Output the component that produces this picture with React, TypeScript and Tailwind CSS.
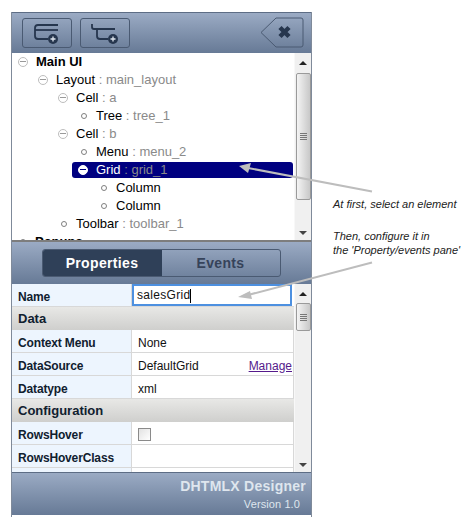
import type { ReactNode } from 'react';

const treeRows = [
    { indent: 6, kind: 'minus', name: 'Main UI', id: '', bold: true },
    { indent: 26, kind: 'minus', name: 'Layout', id: 'main_layout' },
    { indent: 46, kind: 'minus', name: 'Cell', id: 'a' },
    { indent: 67, kind: 'dot', name: 'Tree', id: 'tree_1' },
    { indent: 46, kind: 'minus', name: 'Cell', id: 'b' },
    { indent: 67, kind: 'dot', name: 'Menu', id: 'menu_2' },
    { indent: 66, kind: 'minus', name: 'Grid', id: 'grid_1', selected: true },
    { indent: 87, kind: 'dot', name: 'Column', id: '' },
    { indent: 87, kind: 'dot', name: 'Column', id: '' },
    { indent: 47, kind: 'dot', name: 'Toolbar', id: 'toolbar_1' },
    { indent: 6, kind: 'dot', name: 'Popups', id: '', bold: true },
];

function TreeIcon({ kind, selected }: { kind: string; selected?: boolean }) {
    if (kind === 'dot') {
        return <span className="w-[6px] h-[6px] mx-[2px] rounded-full border border-[#808080] bg-white shrink-0" />;
    }
    return (
        <span className={`relative w-[10px] h-[10px] rounded-full border shrink-0 ${selected ? 'bg-white border-white' : 'bg-white border-[#bdbdbd]'}`}>
            <span className={`absolute left-[1px] top-[3px] w-[6px] h-px ${selected ? 'bg-[#000080]' : 'bg-[#9a9a9a]'}`} />
        </span>
    );
}

function ToolButton({ children }: { children: ReactNode }) {
    return (
        <div className="w-[50px] h-[30px] rounded-[3px] border border-[#4a5a72] flex items-center justify-center">
            {children}
        </div>
    );
}

function ScrollBar({ topClass, thumbClass }: { topClass: string; thumbClass: string }) {
    return (
        <div className="w-[17px] shrink-0 bg-[#f0f0f0] flex flex-col items-center border-l border-[#f8f8f8]">
            <div className={`flex items-center justify-center shrink-0 ${topClass}`}>
                <div className="w-0 h-0 border-x-[4px] border-x-transparent border-b-[4px] border-b-[#222]" />
            </div>
            <div className={`w-[15px] rounded-[2px] border border-[#9a9a9a] bg-gradient-to-r from-[#f4f4f4] to-[#c8c8c8] flex flex-col items-center gap-px shrink-0 ${thumbClass}`}>
                <div className="w-[7px] h-px bg-[#777]" />
                <div className="w-[7px] h-px bg-[#777]" />
                <div className="w-[7px] h-px bg-[#777]" />
                <div className="w-[7px] h-px bg-[#777]" />
            </div>
            <div className="flex-1" />
            <div className="h-[14px] flex items-center justify-center shrink-0">
                <div className="w-0 h-0 border-x-[4px] border-x-transparent border-t-[4px] border-t-[#444]" />
            </div>
        </div>
    );
}

function PropRow({ label, children }: { label: string; children?: ReactNode }) {
    return (
        <div className="flex h-[23px] shrink-0 border-b border-[#d8d8d8]">
            <div className="w-[120px] shrink-0 bg-[#edf5fe] border-r border-[#d8d8d8] pl-[6px] pt-[2px] font-bold text-[12px] tracking-[-0.15px] leading-[22px] text-[#10202f]">
                {label}
            </div>
            <div className="flex-1 flex items-center justify-between pl-[6px] pt-[3px] text-[12px] text-[#111] border-r border-[#d8d8d8]">
                {children}
            </div>
        </div>
    );
}

function GroupRow({ label }: { label: string }) {
    return (
        <div className="h-[23px] shrink-0 bg-gradient-to-b from-[#e8e8e6] to-[#cfcfcd] pl-[6px] font-bold text-[13px] leading-[24px] text-[#10202f]">
            {label}
        </div>
    );
}

export default function App() {
    return (
        <div className="relative w-[464px] h-[529px] bg-white overflow-hidden font-['Liberation_Sans',Arial,sans-serif]">
            <div className="pl-[11px] pt-[12px]">
                <div className="w-[301px] h-[505px] border-x border-[#7f8a9a] flex flex-col">
                    {/* Toolbar */}
                    <div className="h-[41px] shrink-0 border-t border-[#5d6d85] bg-gradient-to-b from-[#9babc4] to-[#677a96] flex items-center pl-[10px] pr-[7px] gap-[8px]">
                        <ToolButton>
                            <svg width="48" height="28" viewBox="0 0 48 28" fill="none" stroke="#26364e" strokeWidth="1.800">
                                <path d="M35 6H15a3 3 0 0 0-3 3v8a3 3 0 0 0 3 3h10" />
                                <path d="M12 11h23" />
                                <circle cx="30" cy="20" r="5" fill="#26364e" stroke="none" />
                                <path d="M27.500 20h5M30 17.500v5" stroke="#dfe6ee" strokeWidth="1.300" />
                            </svg>
                        </ToolButton>
                        <ToolButton>
                            <svg width="48" height="28" viewBox="0 0 48 28" fill="none" stroke="#26364e" strokeWidth="1.800">
                                <path d="M11 5v3a2 2 0 0 0 2 2h21" />
                                <path d="M16 10v7a3 3 0 0 0 3 3h8" />
                                <circle cx="32" cy="20" r="5" fill="#26364e" stroke="none" />
                                <path d="M29.500 20h5M32 17.500v5" stroke="#dfe6ee" strokeWidth="1.300" />
                            </svg>
                        </ToolButton>
                        <svg className="ml-auto" width="44" height="32" viewBox="0 0 44 32" fill="none">
                            <path d="M1 15.500 16 1h25a2 2 0 0 1 2 2v25a2 2 0 0 1-2 2H16z" stroke="#4a5a72" />
                            <path d="M20 10.500l9 9M29 10.500l-9 9" stroke="#26364e" strokeWidth="4.500" />
                        </svg>
                    </div>

                    {/* Tree */}
                    <div className="h-[187px] shrink-0 bg-white flex overflow-hidden">
                        <div className="flex-1 min-w-0 overflow-hidden pr-px">
                            {treeRows.map((row, i) => (
                                <div key={i} className="h-[18px] flex items-center" style={{ paddingLeft: row.indent }}>
                                    <TreeIcon kind={row.kind} selected={row.selected} />
                                    <div className={`h-[16px] flex-1 flex items-center text-[13px] whitespace-nowrap ${row.selected ? 'bg-[#000080] rounded-[3px] text-white ml-[-16px] pl-[24px]' : row.kind === 'dot' ? 'text-black ml-[-1px] pl-[8px]' : 'text-black ml-[-1px] pl-[9px]'} ${row.bold ? 'font-bold' : ''}`}>
                                        {row.name}
                                        {row.id && <span className="text-[#8a8a8a]">&nbsp;: {row.id}</span>}
                                    </div>
                                </div>
                            ))}
                        </div>
                        <ScrollBar topClass="h-[20px]" thumbClass="h-[127px] justify-center" />
                    </div>

                    {/* Tabs */}
                    <div className="h-[44px] shrink-0 border-t-2 border-[#7d7d7d] bg-gradient-to-b from-[#9babc4] to-[#677a96] flex items-center justify-center pr-[1px]">
                        <div className="w-[239px] h-[28px] flex rounded-[3px] border border-[#4a5a72] overflow-hidden font-bold text-[14px] tracking-[0.35px] leading-[26px] text-center">
                            <div className="w-[119px] bg-[#2f4058] text-white">Properties</div>
                            <div className="flex-1 text-[#36435a]">Events</div>
                        </div>
                    </div>

                    {/* Properties */}
                    <div className="h-[188px] shrink-0 flex bg-white overflow-hidden">
                        <div className="flex-1 min-w-0 flex flex-col overflow-hidden">
                            <div className="flex h-[23px] shrink-0 border-b border-[#d8d8d8]">
                                <div className="w-[120px] shrink-0 bg-[#edf5fe] border-r border-[#d8d8d8] pl-[6px] pt-[2px] font-bold text-[12px] tracking-[-0.15px] leading-[22px] text-[#10202f]">Name</div>
                                <div className="flex-1 mr-[2px] h-[22px] border-2 border-[#4d90e0] bg-white pl-[3px] text-[12px] tracking-[0.3px] leading-[18px] text-[#111]">
                                    salesGrid<span className="inline-block w-px h-[14px] bg-black align-middle" />
                                </div>
                            </div>
                            <GroupRow label="Data" />
                            <PropRow label="Context Menu">None</PropRow>
                            <PropRow label="DataSource">
                                <span>DefaultGrid</span>
                                <span className="underline text-[#551a8b] pr-px">Manage</span>
                            </PropRow>
                            <PropRow label="Datatype">xml</PropRow>
                            <GroupRow label="Configuration" />
                            <PropRow label="RowsHover">
                                <span className="w-[13px] h-[13px] border border-[#8a8a8a] bg-gradient-to-br from-[#e2e2e2] to-white" />
                            </PropRow>
                            <PropRow label="RowsHoverClass" />
                            <PropRow label="" />
                        </div>
                        <ScrollBar topClass="h-[19px]" thumbClass="h-[28px] justify-center" />
                    </div>

                    {/* Footer */}
                    <div className="h-[43px] shrink-0 border-t border-[#5d6d85] bg-gradient-to-b from-[#9babc4] to-[#677a96] text-right pr-[5px]">
                        <div className="font-bold text-[14px] tracking-[0.25px] leading-[16px] pt-[5px] text-[#dfe6ee]">DHTMLX Designer</div>
                        <div className="text-[11px] tracking-[0.1px] leading-[14px] pt-[3px] pr-[6px] text-[#dfe6ee]">Version 1.0</div>
                    </div>
                </div>
            </div>

            {/* Annotations */}
            <svg className="absolute left-0 top-0" width="464" height="529" fill="none">
                <path d="M372 191.500 248 168" stroke="#bdbdbd" strokeWidth="2" />
                <path d="M239 166 251 163 248 173z" fill="#bdbdbd" />
                <path d="M372 262.500 248 295" stroke="#bdbdbd" strokeWidth="2" />
                <path d="M238 297 250 291 252 299z" fill="#bdbdbd" />
            </svg>
            <div className="absolute left-[333px] top-[198px] text-[11px] leading-[13px] italic text-[#222] whitespace-nowrap">At first, select an element</div>
            <div className="absolute left-[333px] top-[229px] text-[11px] leading-[14px] italic text-[#222] whitespace-nowrap">
                Then, configure it in
                <br />
                the 'Property/events pane'
            </div>
        </div>
    );
}
